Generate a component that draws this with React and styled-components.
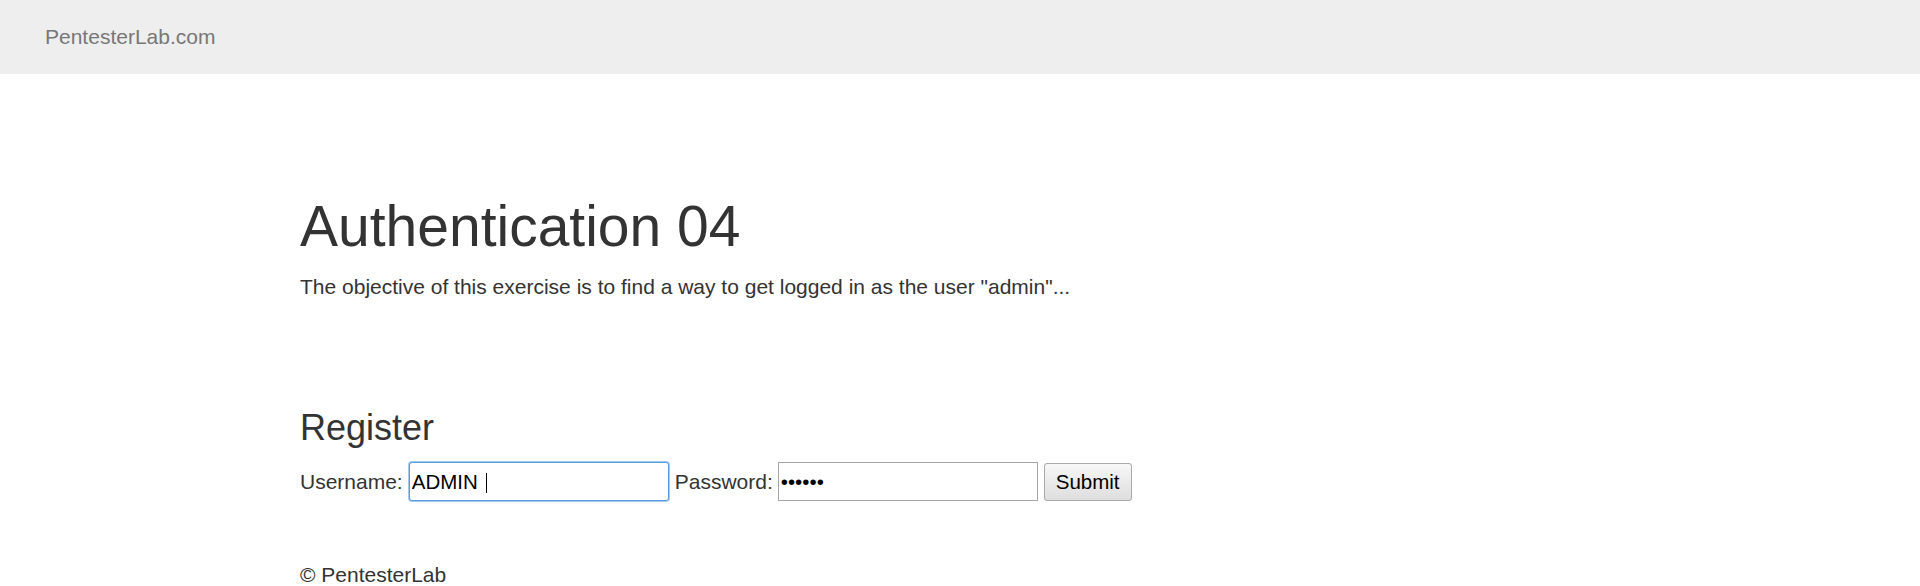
import React from "react";
import styled, { createGlobalStyle } from "styled-components";

const Global = createGlobalStyle`
  html, body { margin: 0; padding: 0; background: #fff; }
  body {
    font-family: "Liberation Sans", Arial, Helvetica, sans-serif;
    font-size: 21px;
    color: #333;
  }
`;

const Navbar = styled.header`
  height: 74px;
  background: #eeeeee;
  display: flex;
  align-items: center;
  padding-left: 45px;
`;

const Brand = styled.a`
  font-size: 21px;
  color: #777;
  text-decoration: none;
  line-height: 30px;
`;

const Main = styled.main`
  padding-left: 300px;
`;

const Title = styled.h1`
  margin: 121px 0 0;
  font-size: 57px;
  font-weight: 400;
  line-height: 63px;
  color: #333;
`;

const Lead = styled.p`
  margin: 14px 0 0;
  font-size: 21px;
  line-height: 30px;
`;

const SubTitle = styled.h2`
  margin: 106px 0 0;
  font-size: 36px;
  font-weight: 400;
  line-height: 40px;
`;

const Form = styled.form`
  margin-top: 14px;
  display: flex;
  align-items: center;
  gap: 6px;
`;

const Label = styled.label`
  font-size: 21px;
  line-height: 30px;
  margin-right: ${(p) => p.$tight ? "-1px" : "0"};
`;

const Field = styled.span`
  position: relative;
  display: inline-flex;
`;

const Input = styled.input`
  box-sizing: border-box;
  width: 260px;
  height: 39px;
  padding: 0 2px;
  font-family: "Liberation Sans", Arial, sans-serif;
  font-size: 20.5px;
  color: #000;
  background: #fff;
  border: 1px solid ${(p) => (p.$focused ? "#5a9bdc" : "#a6a6a6")};
  border-radius: ${(p) => (p.$focused ? "3px" : "0")};
  box-shadow: ${(p) => (p.$focused ? "0 0 0 1px rgba(90,155,220,0.55)" : "none")};
  outline: none;
`;

const Caret = styled.span`
  position: absolute;
  left: 77px;
  top: 11px;
  width: 1px;
  height: 20px;
  background: #000;
`;

const Button = styled.button`
  box-sizing: border-box;
  height: 38px;
  padding: 0 11px;
  font-family: "Liberation Sans", Arial, sans-serif;
  font-size: 20.5px;
  color: #000;
  background: linear-gradient(#f7f7f7, #dedede);
  border: 1px solid #a9a9a9;
  border-radius: 3px;
`;

const Footer = styled.footer`
  margin-top: 59px;
  font-size: 21px;
  line-height: 30px;
`;

export default function App() {
  return (
    <>
      <Global />
      <Navbar>
        <Brand href="#">PentesterLab.com</Brand>
      </Navbar>
      <Main>
        <Title>Authentication 04</Title>
        <Lead>
          The objective of this exercise is to find a way to get logged in as the user "admin"...
        </Lead>
        <SubTitle>Register</SubTitle>
        <Form onSubmit={(e) => e.preventDefault()}>
          <Label htmlFor="username">Username:</Label>
          <Field>
            <Input id="username" type="text" $focused defaultValue="ADMIN " readOnly />
            <Caret />
          </Field>
          <Label htmlFor="password" $tight>Password:</Label>
          <Field>
            <Input id="password" type="password" defaultValue="123456" readOnly />
          </Field>
          <Button type="submit">Submit</Button>
        </Form>
        <Footer>© PentesterLab</Footer>
      </Main>
    </>
  );
}
